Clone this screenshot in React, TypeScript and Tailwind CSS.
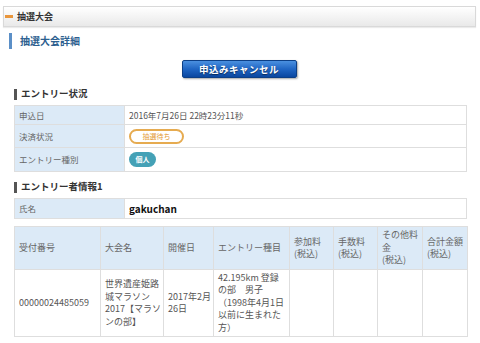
const font = "font-['Noto_Sans_CJK_JP','Noto_Sans',sans-serif]";

function Heading({ children }: { children: React.ReactNode }) {
  return (
    <div className="flex items-center h-[14px]">
      <span className="w-[3px] h-[11px] bg-[#555]" />
      <span className="ml-[4px] text-[9.5px] font-bold text-[#333] leading-none">{children}</span>
    </div>
  );
}

function Row({ label, children, h }: { label: string; children: React.ReactNode; h: string }) {
  return (
    <tr className={h}>
      <td className="w-[110px] bg-[#dceaf7] border border-[#dedede] pl-[4px] text-[#666]">{label}</td>
      <td className="border border-[#dedede] pl-[4px] bg-white">{children}</td>
    </tr>
  );
}

const heads = [
  { t: "受付番号", w: "w-[86px]" },
  { t: "大会名", w: "w-[63px]" },
  { t: "開催日", w: "w-[50px]" },
  { t: "エントリー種目", w: "w-[76px]" },
  { t: "参加料\n(税込)", w: "w-[44px]" },
  { t: "手数料\n(税込)", w: "w-[44px]" },
  { t: "その他料金\n(税込)", w: "w-[45px]" },
  { t: "合計金額\n(税込)", w: "w-[45px]" },
];

const body = [
  "00000024485059",
  "世界遺産姫路城マラソン2017【マラソンの部】",
  "2017年2月26日",
  "42.195km 登録の部　男子（1998年4月1日以前に生まれた方）",
  "",
  "",
  "",
  "",
];

export default function App() {
  return (
    <div className={`w-[480px] h-[343px] overflow-hidden bg-white pt-[6px] pl-[3px] pr-[4px] ${font} text-[#555]`}>
      {/* page bar */}
      <div className="h-[21px] flex items-center border border-[#d9d9d9] bg-linear-to-b from-white to-[#e9e9e9] shadow-[0_1px_1px_rgba(0,0,0,0.08)]">
        <span className="ml-[1px] w-[8px] h-[3px] bg-[#e9963c]" />
        <span className="ml-[4px] text-[9px] font-bold text-[#333] leading-none">抽選大会</span>
      </div>

      {/* sub title */}
      <div className="mt-[6px] ml-[6px] flex items-center h-[16px]">
        <span className="w-[3px] h-[16px] bg-[#5b8fc7]" />
        <span className="ml-[8px] text-[10px] font-bold text-[#2d5f8f] leading-none">抽選大会詳細</span>
      </div>

      <div className="mt-[11px] flex justify-center pr-[1px]">
        <button className="w-[115px] h-[18px] rounded-[2px] border border-[#0c3f86] bg-linear-to-b from-[#4a90e0] via-[#2066c4] to-[#0a47a0] text-white text-[9.5px] font-bold tracking-[0.5px] shadow-[1px_1px_2px_rgba(0,0,0,0.35)] [text-shadow:0_1px_1px_rgba(0,0,0,0.5)]">
          申込みキャンセル
        </button>
      </div>

      <div className="pl-[11px] pr-[9px]">
        <div className="mt-[9px]">
          <Heading>エントリー状況</Heading>
        </div>
        <table className="mt-[4px] w-full border-collapse text-[8.5px] table-fixed">
          <tbody>
            <Row label="申込日" h="h-[19px]">
              2016年7月26日 22時23分11秒
            </Row>
            <Row label="決済状況" h="h-[23px]">
              <span className="inline-flex items-center justify-center w-[55px] h-[15px] rounded-full border-2 border-[#e6ab50] text-[7px] text-[#e39a35] leading-none">
                抽選待ち
              </span>
            </Row>
            <Row label="エントリー種別" h="h-[24px]">
              <span className="inline-flex items-center justify-center w-[27px] h-[15px] rounded-full bg-[#44a1b6] text-[7px] font-bold text-white leading-none">
                個人
              </span>
            </Row>
          </tbody>
        </table>

        <div className="mt-[8px]">
          <Heading>エントリー者情報1</Heading>
        </div>
        <table className="mt-[4px] w-full border-collapse text-[8.5px] table-fixed">
          <tbody>
            <Row label="氏名" h="h-[20px]">
              <span className="font-bold text-[10px] text-[#111]">gakuchan</span>
            </Row>
          </tbody>
        </table>

        <table className="mt-[7px] w-full border-collapse table-fixed text-[9px] leading-[12.5px]">
          <colgroup>
            {heads.map((h) => (
              <col key={h.t} className={h.w} />
            ))}
          </colgroup>
          <thead>
            <tr className="h-[43px]">
              {heads.map((h) => (
                <th key={h.t} className="bg-[#dceaf7] border border-[#dedede] pl-[4px] pr-[2px] text-left font-normal text-[#666] whitespace-pre-line align-middle">
                  {h.t}
                </th>
              ))}
            </tr>
          </thead>
          <tbody>
            <tr className="h-[67px]">
              {body.map((b, i) => (
                <td key={i} className="border border-[#dedede] pl-[4px] pr-[2px] align-middle">
                  {b}
                </td>
              ))}
            </tr>
          </tbody>
        </table>
      </div>
    </div>
  );
}
